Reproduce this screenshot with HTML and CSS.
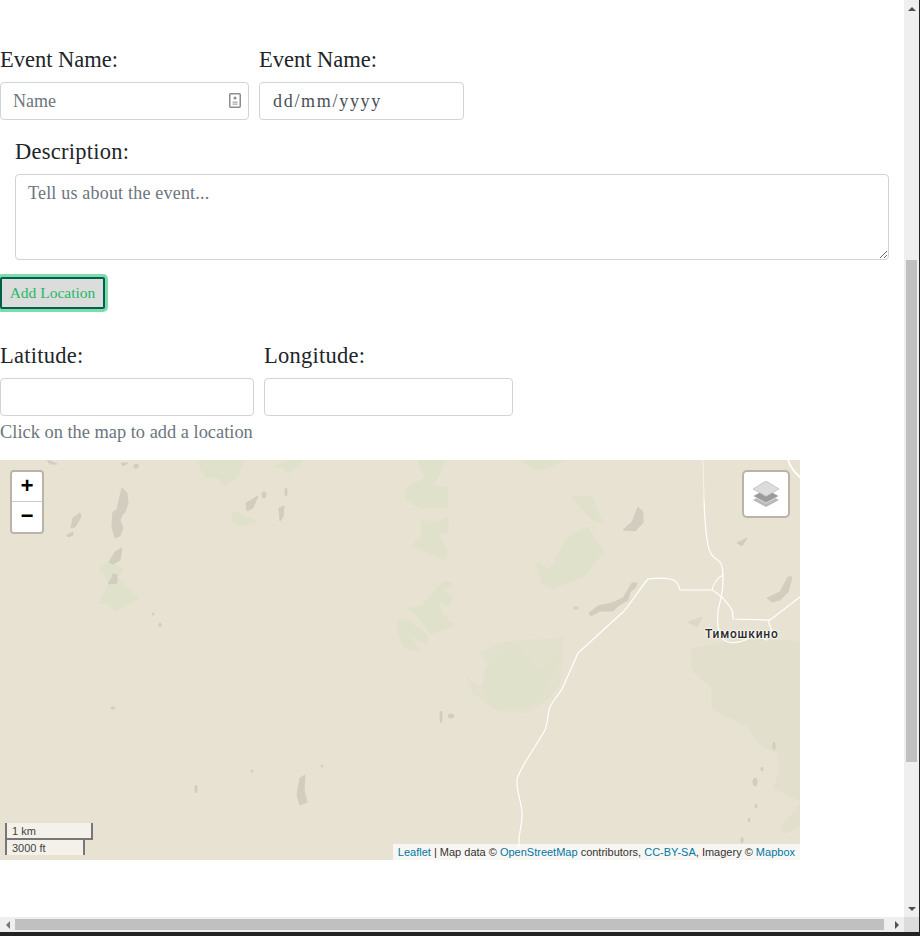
FILE: index.html
```html
<!DOCTYPE html>
<html lang="en">
<head>
<meta charset="utf-8">
<title>Add Event</title>
<link rel="stylesheet" href="styles.css">
</head>
<body>
<div class="window">
  <main class="content">
    <form class="form">
      <div class="row">
        <div class="field field-name">
          <label class="label" for="name">Event Name:</label>
          <div class="input-wrap">
            <input class="input" id="name" type="text" placeholder="Name">
            <svg class="card-icon" viewBox="0 0 12 15" aria-hidden="true">
              <rect x="0.75" y="0.75" width="10.5" height="13.5" rx="1" fill="#fff" stroke="#8c8c8c" stroke-width="1.5"/>
              <circle cx="6" cy="5" r="1.5" fill="#8c8c8c"/>
              <path d="M3.5 8.5h5v1.2h-5zM3.5 10.6h5v1.2h-5z" fill="#a8a8a8"/>
            </svg>
          </div>
        </div>
        <div class="field field-date">
          <label class="label" for="date">Event Name:</label>
          <input class="input input-date" id="date" type="text" value="dd/mm/yyyy">
        </div>
      </div>
      <div class="description">
        <label class="label label-wide" for="desc">Description:</label>
        <textarea class="textarea" id="desc" placeholder="Tell us about the event..."></textarea>
      </div>
      <button class="add-btn" type="button">Add Location</button>
      <div class="row row-coords">
        <div class="field field-lat">
          <label class="label label-wide" for="lat">Latitude:</label>
          <input class="input" id="lat" type="text">
        </div>
        <div class="field field-lng">
          <label class="label label-wide" for="lng">Longitude:</label>
          <input class="input" id="lng" type="text">
        </div>
      </div>
      <p class="help">Click on the map to add a location</p>
    </form>

    <section class="map">
      <svg class="map-art" viewBox="0 0 800 400" aria-hidden="true">
        <rect width="800" height="400" fill="#e7e2d2"/>
        <g fill="#e2e0cd" stroke="#e2e0cd" stroke-linejoin="round" stroke-width="3">
          <path d="M692 190 693 210 713 227 713 248 750 267 760 283 778 293 780 310 775 328 802 340V183Q740 176 692 190Z"/>
          <path d="M802 343 783 367 785 372 802 363Z"/>
        </g>
        <g fill="#dfe1ca" stroke="#dfe1ca" stroke-linejoin="round" stroke-width="1">
          <path d="M197 0H243L238 15 225 26 217 17 205 17Z"/>
          <path d="M273 7 287 0H303L295 8 288 13 282 7Z"/>
          <path d="M232 51 257 61 240 66 233 63Z"/>
          <path d="M99 108 110 102 123 110 117 117 138 138 115 151 107 143 99 143 110 123Z"/>
          <path d="M418 0H445L440 13 432 25 447 28 448 48 420 48 407 40 407 28 425 18Z"/>
          <path d="M422 60 435 63 448 58 448 73 437 73 447 90 446 99 437 97 413 85 422 75Z"/>
          <path d="M537 103 550 110 567 78 587 67 604 92 583 117 552 128 542 123Z"/>
          <path d="M571 37H592L602 62 593 60Z"/>
          <path d="M443 122 453 123 443 132 452 135 448 146 438 140 442 153 454 165 430 174 422 160 407 148 422 146Z"/>
          <path d="M398 160 410 162 427 175 427 185 410 175 420 192 403 187 398 170Z"/>
          <path d="M520 0H565L548 8 535 10Z"/>
          <path d="M480 192 505 182 562 178 560 223 547 240 527 252 497 250 473 233 467 219 483 228 490 207Z" opacity=".6"/>
          <path d="M505 183 520 190 540 210 559 198 547 227 527 247 493 247 483 227 487 207 505 193Z"/>
        </g>
        <g fill="#d2cdbf" stroke="#d2cdbf" stroke-linejoin="round" stroke-width="1">
          <path d="M122 28 127 33 128 43 125 52 122 55 120 60 123 68 120 76 115 78 112 67 113 52 117 50 119 40Z"/>
          <path d="M80 53 81 57 75 67 71 68 73 58Z"/>
          <path d="M67 75 73 72 73 75 68 77Z"/>
          <path d="M122 88 120 100 113 104 109 102 115 92Z"/>
          <path d="M113 114 117 115 117 123 108 124 112 118Z"/>
          <path d="M47 0 57 4 50 4Z"/>
          <path d="M121 3H128L123 6Z"/>
          <path d="M134 5 138 4V8H134Z"/>
          <path d="M246 43 258 36 253 48 247 51Z"/>
          <ellipse cx="264" cy="35" rx="2" ry="3"/>
          <path d="M279 48 284 46 283 57 280 61Z"/>
          <ellipse cx="286" cy="32" rx="1" ry="4"/>
          <path d="M638 47 643 52V63L635 71 623 70 632 62Z"/>
          <path d="M632 123H637L635 128 630 132 628 140 618 146 613 151H600L591 156 589 153 598 146 612 143 623 138Z"/>
          <path d="M767 138 780 132 788 117H792L788 132 780 140 772 142Z"/>
          <path d="M737 83 747 78 742 86Z"/>
          <path d="M688 162 702 157 697 167Z" opacity=".5"/>
          <path d="M300 318 305 315 304 330 307 342 300 345 297 335Z"/>
          <ellipse cx="196" cy="329" rx="1" ry="4"/>
          <ellipse cx="441" cy="257" rx="1" ry="6"/>
          <ellipse cx="451" cy="256" rx="3" ry="2"/>
          <ellipse cx="576" cy="148" rx="2" ry="1"/>
          <ellipse cx="774" cy="286" rx="1" ry="4"/>
          <ellipse cx="762" cy="309" rx="1" ry="2"/>
          <ellipse cx="755" cy="322" rx="2" ry="4"/>
          <ellipse cx="756" cy="346" rx="1" ry="2"/>
          <ellipse cx="749" cy="360" rx="1" ry="2"/>
          <ellipse cx="742" cy="380" rx="1" ry="3"/>
          <ellipse cx="113" cy="248" rx="2" ry="1"/>
          <ellipse cx="252" cy="311" rx="1" ry="1"/>
          <ellipse cx="322" cy="306" rx="1" ry="1"/>
          <ellipse cx="153" cy="154" rx="1" ry="1"/>
          <ellipse cx="160" cy="165" rx="1" ry="2"/>
        </g>
        <g fill="none" stroke="#fff" stroke-width="1.200" stroke-linejoin="round" stroke-linecap="round">
          <path d="M519 385C518 375 523 362 522 352 521 340 516 330 517 320 518 310 540 280 545 270 548 262 548 252 550 247 553 240 560 234 563 227L578 193 623 152C630 145 640 128 648 119 655 118 665 118 670 119 676 120 679 124 680 130L712 130C720 134 728 143 732 150 733 154 733 158 733 159L770 160 800 137"/>
          <path d="M704 40C705 60 705 70 708 85 709 95 715 98 720 102 723 106 723 115 723 118 723 125 722 135 720 142 716 155 717 170 722 178 727 185 740 183 750 178 757 175 762 178 767 180"/>
          <path d="M703 0 704 40" opacity=".5"/>
          <path d="M712 130C713 124 718 117 723 115"/>
          <path d="M768 160 772 172"/>
          <path d="M519 385 517 400" opacity=".6"/>
          <path d="M788 0C790 6 794 12 800 17" stroke-width="1.800"/>
        </g>
      </svg>
      <span class="place">Тимошкино</span>
      <div class="zoom">
        <a class="zoom-btn zoom-in">+</a>
        <a class="zoom-btn">−</a>
      </div>
      <div class="layers">
        <svg class="layers-icon" viewBox="0 0 26 26" aria-hidden="true">
          <path d="M13 12 26 19 13 26 0 19Z" fill="#b9b9b9"/>
          <path d="M13 8 26 15 13 22 0 15Z" fill="#9b9b9b" stroke="#fff" stroke-width=".6"/>
          <path d="M13 0 26 8 13 15.500 0 8Z" fill="#dcdcdc" stroke="#b0b0b0" stroke-width=".6"/>
        </svg>
      </div>
      <div class="scale">
        <div class="scale-line scale-km">1 km</div>
        <div class="scale-line scale-ft">3000 ft</div>
      </div>
      <div class="attribution"><a>Leaflet</a> | Map data © <a>OpenStreetMap</a> contributors, <a>CC-BY-SA</a>, Imagery © <a>Mapbox</a></div>
    </section>
  </main>

  <div class="vbar">
    <span class="arrow arrow-up"></span>
    <span class="vbar-gap"></span>
    <span class="vthumb"></span>
    <span class="vbar-rest"></span>
    <span class="arrow arrow-down"></span>
  </div>
  <div class="hbar">
    <span class="arrow arrow-left"></span>
    <span class="hthumb"></span>
    <span class="hbar-rest"></span>
    <span class="arrow arrow-right"></span>
  </div>
  <div class="corner"></div>
</div>
</body>
</html>
```

FILE: styles.css
```css
* { box-sizing: border-box; }

html, body {
  margin: 0;
  height: 936px;
  overflow: hidden;
  background: #232323;
}

.window {
  display: grid;
  grid-template-columns: 904px 15px;
  grid-template-rows: 917px 15px;
  width: 919px;
}

.content {
  background: #fff;
  overflow: hidden;
  padding-top: 44px;
  font-family: "Liberation Serif", serif;
  color: #212529;
}

.row {
  display: flex;
  gap: 10px;
  margin-bottom: 16px;
}

.row-coords { margin: 31px 0 0; }

.field-name { width: 249px; }
.field-date { width: 205px; }
.field-lat { width: 254px; }
.field-lng { width: 249px; }

.label {
  display: block;
  font-size: 22.500px;
  line-height: 31px;
  height: 30px;
  margin-bottom: 8px;
}

.label-wide { letter-spacing: .25px; }

.input-wrap { position: relative; }

.input {
  display: block;
  width: 100%;
  height: 38px;
  padding: 6px 12px;
  border: 1px solid #ced4da;
  border-radius: 4px;
  background: #fff;
  font: 18px "Liberation Serif", serif;
  color: #495057;
}

.input::placeholder,
.textarea::placeholder { color: #6c757d; opacity: 1; }

.input-date {
  padding-left: 13px;
  letter-spacing: 1.700px;
}

.card-icon {
  position: absolute;
  top: 11px;
  right: 8px;
  width: 12px;
  height: 15px;
}

.description { padding: 0 15px; }

.textarea {
  display: block;
  width: 100%;
  height: 86px;
  padding: 6px 12px;
  border: 1px solid #ced4da;
  border-radius: 4px;
  background: #fff;
  font: 18px/24px "Liberation Serif", serif;
  letter-spacing: .2px;
  color: #495057;
}

.add-btn {
  display: block;
  width: 105px;
  height: 32px;
  margin-top: 17px;
  padding: 0;
  border: 2px solid #00604c;
  border-radius: 2px;
  background: #dcdcdc;
  box-shadow: 0 0 0 3px #80dbac;
  color: #24b968;
  font: 15.500px "Liberation Serif", serif;
}

.help {
  margin: 4px 0 16px;
  font-size: 18.400px;
  line-height: 25px;
  height: 24px;
  color: #6c757d;
}

.map {
  position: relative;
  width: 800px;
  height: 400px;
  overflow: hidden;
  font-family: "Liberation Sans", sans-serif;
}

.map-art {
  display: block;
  width: 800px;
  height: 400px;
}

.place {
  position: absolute;
  left: 705px;
  top: 166px;
  font: 500 12px/16px Roboto, sans-serif;
  letter-spacing: .8px;
  color: #2a2a2a;
  text-shadow: 0 0 2px #fff, 0 0 2px #fff, 0 0 3px #fff;
  white-space: nowrap;
}

.zoom {
  position: absolute;
  left: 10px;
  top: 10px;
  width: 34px;
  border: 2px solid rgba(0, 0, 0, .2);
  border-radius: 4px;
  background-clip: padding-box;
}

.zoom-btn {
  display: block;
  width: 30px;
  height: 30px;
  background: #fff;
  color: #000;
  font: bold 22px/31px "Liberation Mono", monospace;
  text-align: center;
  border-radius: 0 0 2px 2px;
}

.zoom-in {
  border-bottom: 1px solid #ccc;
  border-radius: 2px 2px 0 0;
}

.layers {
  position: absolute;
  right: 10px;
  top: 10px;
  display: flex;
  align-items: center;
  justify-content: center;
  width: 48px;
  height: 48px;
  border: 2px solid rgba(0, 0, 0, .2);
  border-radius: 5px;
  background: #fff;
  background-clip: padding-box;
}

.layers-icon {
  width: 26px;
  height: 26px;
}

.scale {
  position: absolute;
  left: 5px;
  bottom: 5px;
}

.scale-line {
  height: 17px;
  padding: 1px 5px 0;
  border: 2px solid #777;
  border-top: 0;
  background: rgba(255, 255, 255, .5);
  font-size: 11px;
  line-height: 14px;
  color: #444;
  white-space: nowrap;
}

.scale-km { width: 88px; }

.scale-ft {
  width: 80px;
  height: 15px;
  padding-top: 1px;
  border-bottom: 0;
}

.attribution {
  position: absolute;
  right: 0;
  bottom: 0;
  padding: 0 5px;
  background: rgba(255, 255, 255, .7);
  font-size: 11px;
  line-height: 16px;
  color: #333;
  white-space: nowrap;
}

.attribution a { color: #0078a8; }

.vbar {
  display: flex;
  flex-direction: column;
  align-items: center;
  background: #efefef;
}

.vbar-gap { height: 243px; }
.vthumb { width: 11px; height: 502px; background: #c0c0c0; }
.vbar-rest { flex: 1; }

.hbar {
  display: flex;
  align-items: center;
  background: #efefef;
}

.hthumb { width: 869px; height: 11px; background: #c0c0c0; }
.hbar-rest { flex: 1; }

.corner { background: #dcdcdc; }

.arrow {
  display: flex;
  flex: none;
  width: 15px;
  height: 15px;
  align-items: center;
  justify-content: center;
}

.arrow::before {
  content: "";
  border: 4px solid transparent;
}

.arrow-up { height: 17px; }
.arrow-down { height: 17px; }
.arrow-up::before { border-top: 0; border-bottom: 4px solid #505050; }
.arrow-down::before { border-bottom: 0; border-top: 4px solid #505050; }
.arrow-left::before { border-left: 0; border-right: 4px solid #777; }
.arrow-right::before { border-right: 0; border-left: 4px solid #505050; }
```
